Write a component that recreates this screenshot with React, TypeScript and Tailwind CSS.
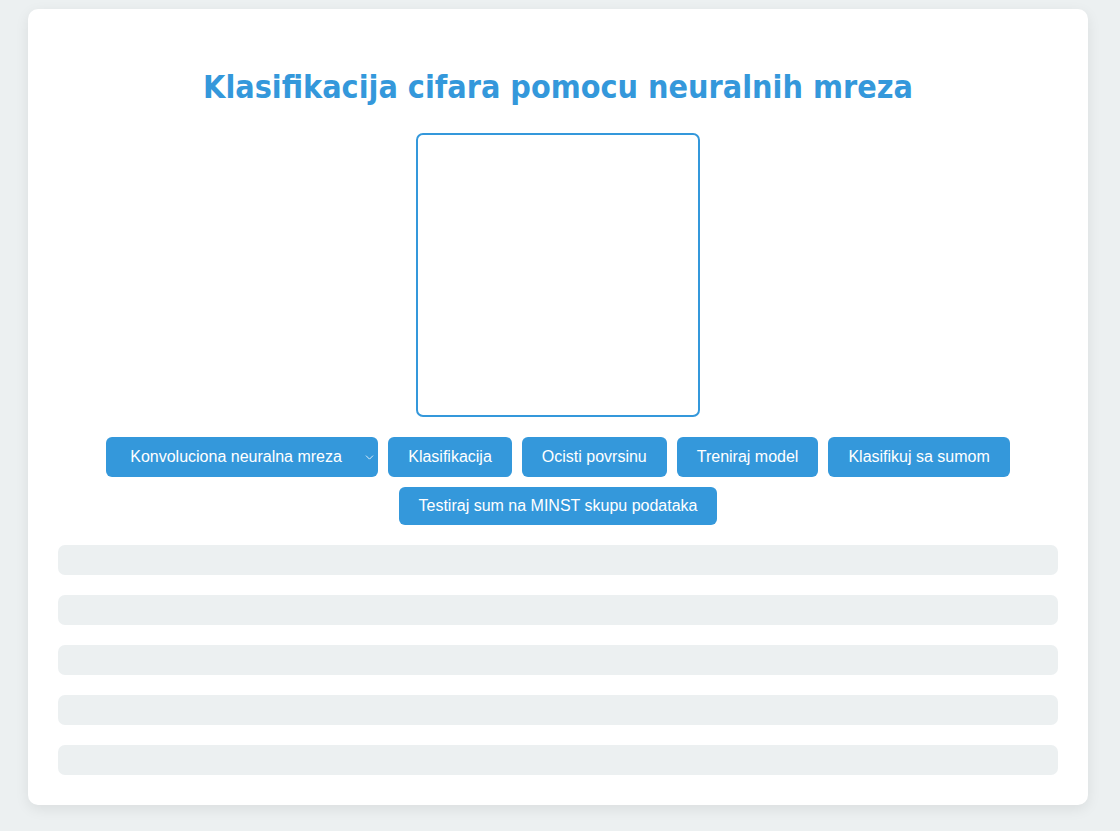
import { ChevronDown } from "lucide-react";

const buttons = ["Klasifikacija", "Ocisti povrsinu", "Treniraj model", "Klasifikuj sa sumom", "Testiraj sum na MINST skupu podataka"];

export default function App() {
  return (
    <div className="min-h-screen w-full bg-[#ecf0f1] px-[28px] pt-[9px] pb-[26px]" style={{ fontFamily: "'Liberation Sans', Arial, sans-serif" }}>
      <div className="w-[1060px] rounded-[10px] bg-white p-[30px] shadow-[0_4px_14px_rgba(0,0,0,0.08)]">
        <h1
          className="mt-[28px] mb-[26px] text-center text-[32px] leading-[40px] font-bold text-[#3498db]"
          style={{ fontFamily: "'DejaVu Sans Condensed', 'DejaVu Sans', Verdana, sans-serif" }}
        >
          Klasifikacija cifara pomocu neuralnih mreza
        </h1>

        {/* drawing canvas */}
        <div className="mx-auto h-[284px] w-[284px] rounded-[7px] border-2 border-[#3498db] bg-white" />

        <div className="mt-[20px] flex flex-wrap justify-center gap-[10px]">
          <div className="relative">
            <select className="h-[40px] w-[272px] appearance-none rounded-[6px] bg-[#3498db] pl-[24px] text-[16px] text-white outline-none">
              <option>Konvoluciona neuralna mreza</option>
            </select>
            <ChevronDown className="pointer-events-none absolute top-[14px] right-[2px] h-[13px] w-[13px] text-white" strokeWidth={1.5} />
          </div>
          {buttons.map((b) => (
            <button key={b} className="rounded-[6px] bg-[#3498db] px-[20px] py-[10px] text-[16px] leading-[18px] text-white">
              {b}
            </button>
          ))}
        </div>

        <div className="mt-[20px] flex flex-col gap-[20px]">
          {[0, 1, 2, 3, 4].map((i) => (
            <div key={i} className="h-[30px] rounded-[7px] bg-[#ecf0f1]" />
          ))}
        </div>
      </div>
    </div>
  );
}
